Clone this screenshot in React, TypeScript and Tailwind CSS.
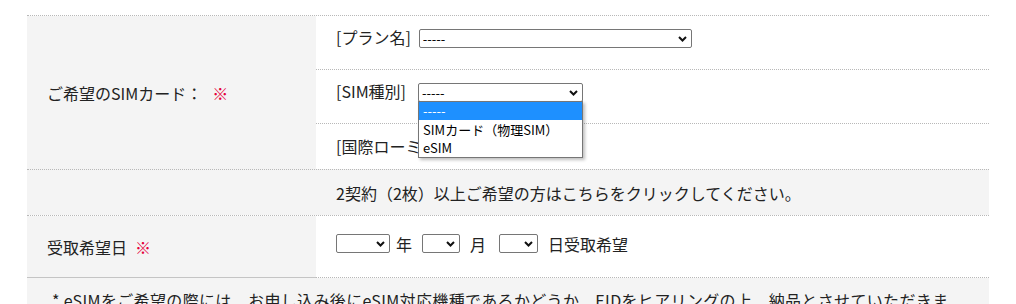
import React from "react";

const jp = "font-['Noto_Sans_CJK_JP',sans-serif]";

function Chevron() {
  return (
    <svg
      className="pointer-events-none absolute right-[5px] top-[7px]"
      width="9"
      height="6"
      viewBox="0 0 9 6"
      fill="none"
    >
      <path d="M1 1l3.5 3.5L8 1" stroke="#111" strokeWidth="2" />
    </svg>
  );
}

function Select({ className, value = "" }: { className: string; value?: string }) {
  return (
    <span className="relative block">
      <select
        defaultValue={value}
        className={`block h-[19px] appearance-none rounded-[2px] border border-[#767676] bg-white pl-[3px] text-[13px] leading-[17px] text-black outline-none ${jp} ${className}`}
      >
        <option value={value}>{value}</option>
      </select>
      <Chevron />
    </span>
  );
}

export default function App() {
  return (
    <div className={`h-[304px] w-[1016px] overflow-hidden bg-white pl-[27px] pt-[15px] text-[16px] leading-[22px] text-[#222] ${jp}`}>
      <div className="w-[962px] border-t border-dotted border-[#b8b8b8]">
        {/* ご希望のSIMカード */}
        <div className="grid grid-cols-[289px_673px]">
          <div className="flex items-center bg-[#f4f4f4] pl-[20px]">
            ご希望のSIMカード：<span className="ml-[10px] text-[#e5003a]">※</span>
          </div>
          <div>
            <div className="flex h-[53px] items-start pl-[20px] pt-[10px]">
              <span>[プラン名]</span>
              <span className="ml-[8px] mt-[3px] flex">
                <Select className="w-[273px]" value="-----" />
              </span>
            </div>
            <div className="flex h-[54px] items-start border-t border-dotted border-[#b8b8b8] pl-[20px] pt-[10px]">
              <span>[SIM種別]</span>
              <span className="relative ml-[12px] mt-[3px] flex">
                <Select className="w-[165px]" value="-----" />
                <div className="absolute left-0 top-[18px] z-10 w-[165px] border border-[#767676] bg-white text-[13px] leading-[18px] text-black shadow-[2px_2px_3px_rgba(0,0,0,0.25)]">
                  <div className="h-[18px] bg-[#1e90ff] pl-[4px] text-white">-----</div>
                  <div className="h-[19px] pl-[4px] pt-[1px]">SIMカード（物理SIM）</div>
                  <div className="h-[18px] pl-[4px]">eSIM</div>
                </div>
              </span>
            </div>
            <div className="flex h-[46px] items-start border-t border-dotted border-[#b8b8b8] pl-[20px] pt-[11px]">
              <span>[国際ローミング]</span>
            </div>
          </div>
        </div>

        {/* 2契約 */}
        <div className="grid h-[46px] grid-cols-[289px_673px] border-t border-dotted border-[#b8b8b8] bg-[#f4f4f4]">
          <div />
          <div className="flex items-center pl-[20px]">
            2契約（2枚）以上ご希望の方はこちらをクリックしてください。
          </div>
        </div>

        {/* 受取希望日 */}
        <div className="grid h-[62px] grid-cols-[289px_673px] border-t border-dotted border-[#b8b8b8]">
          <div className="flex items-center bg-[#f4f4f4] pl-[20px]">
            受取希望日<span className="ml-[8px] text-[#e5003a]">※</span>
          </div>
          <div className="flex items-center pl-[20px] pb-[6px]">
            <Select className="w-[54px]" />
            <span className="ml-[6px]">年</span>
            <span className="ml-[10px] flex">
              <Select className="w-[38px]" />
            </span>
            <span className="ml-[10px]">月</span>
            <span className="ml-[13px] flex">
              <Select className="w-[39px]" />
            </span>
            <span className="ml-[10px]">日受取希望</span>
          </div>
        </div>

        {/* 注意書き */}
        <div className="grid grid-cols-[289px_673px]">
          <div className="border-t border-solid border-[#c4c4c4]" />
          <div className="border-t border-dotted border-[#b8b8b8]" />
        </div>
        <div className="bg-[#f4f4f4] pl-[25px] pr-[36px] pt-[11px] tracking-[0.35px]">
          * eSIMをご希望の際には、お申し込み後にeSIM対応機種であるかどうか、EIDをヒアリングの上、納品とさせていただきます。
        </div>
      </div>
    </div>
  );
}
